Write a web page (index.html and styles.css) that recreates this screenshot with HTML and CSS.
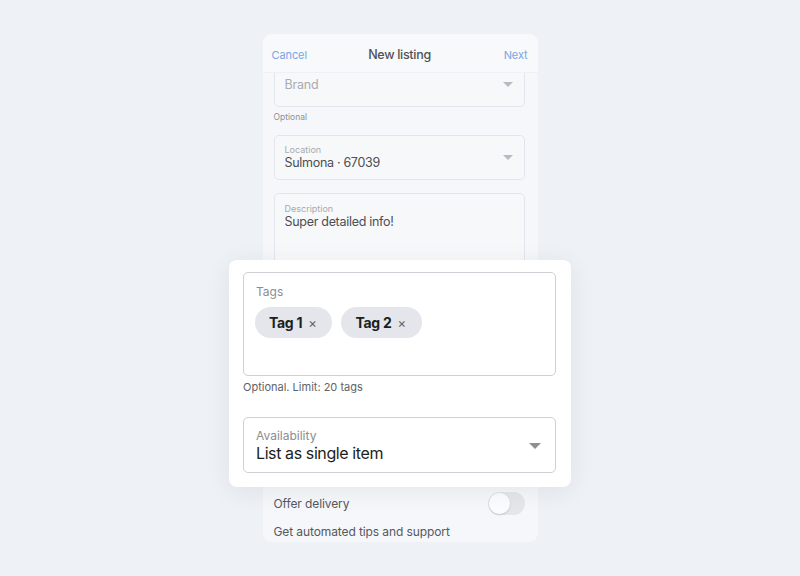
FILE: index.html
```html
<!DOCTYPE html>
<html>
<head>
<meta charset="utf-8">
<link rel="stylesheet" href="styles.css">
</head>
<body>
<div class="stage">
  <div class="phone">
    <div class="phone-header">
      <span class="link">Cancel</span>
      <span class="title">New listing</span>
      <span class="link link-right">Next</span>
    </div>
    <div class="phone-body">
      <div class="field field-brand">
        <span class="placeholder">Brand</span>
        <span class="caret"></span>
      </div>
      <div class="hint">Optional</div>
      <div class="field field-loc">
        <div class="field-text">
          <span class="label">Location</span>
          <span class="value">Sulmona · 67039</span>
        </div>
        <span class="caret"></span>
      </div>
      <div class="field field-desc">
        <div class="field-text">
          <span class="label">Description</span>
          <span class="value">Super detailed info!</span>
        </div>
      </div>
      <div class="field field-hidden"></div>
      <div class="field field-hidden2"></div>
      <div class="row row-first">
        <span>Offer delivery</span>
        <span class="toggle"><span class="knob"></span></span>
      </div>
      <div class="row">
        <span>Get automated tips and support</span>
      </div>
    </div>
  </div>

  <div class="card">
    <div class="tags-box">
      <div class="big-label">Tags</div>
      <div class="chips">
        <span class="chip">Tag 1 <span class="x">×</span></span>
        <span class="chip">Tag 2 <span class="x">×</span></span>
      </div>
    </div>
    <div class="big-hint">Optional. Limit: 20 tags</div>
    <div class="select-box">
      <div class="select-text">
        <span class="big-label">Availability</span>
        <span class="big-value">List as single item</span>
      </div>
      <span class="big-caret"></span>
    </div>
  </div>
</div>
</body>
</html>
```

FILE: styles.css
```css
* { box-sizing: border-box; }
html, body { margin: 0; padding: 0; }
body {
  background: #eef1f5;
  font-family: Inter, "Noto Sans", "Liberation Sans", sans-serif;
}
.stage {
  position: relative;
  width: 800px;
  height: 576px;
  padding-top: 34px;
}
.phone {
  width: 275px;
  height: 508px;
  margin: 0 auto;
  border-radius: 9px;
  background: #f5f7fa;
  overflow: hidden;
  display: flex;
  flex-direction: column;
}
.phone-header {
  position: relative;
  z-index: 2;
  height: 39px;
  flex: none;
  display: grid;
  grid-template-columns: 1fr auto 1fr;
  align-items: center;
  padding: 3px 10px 0 9px;
  background: #f7f9fb;
  border-bottom: 1px solid #eef0f3;
}
.link { font-size: 11px; color: #79a5e4; letter-spacing: -0.1px; }
.link-right { justify-self: end; }
.title { font-size: 12.5px; font-weight: 500; color: #505256; letter-spacing: -0.3px; }
.phone-body {
  padding: 0 13px 0 11px;
  display: flex;
  flex-direction: column;
}
.field {
  border: 1px solid #e2e5ea;
  border-radius: 5px;
  background: #f7f8fa;
  display: flex;
  align-items: center;
  justify-content: space-between;
  padding: 0 11px 0 10px;
}
.field-brand { margin-top: -12px; height: 46px; }
.placeholder { font-size: 12.5px; color: #a9acb0; letter-spacing: -0.2px; }
.caret {
  width: 0; height: 0;
  border-left: 5px solid transparent;
  border-right: 5px solid transparent;
  border-top: 5px solid #b8bbbf;
}
.hint { font-size: 8.5px; line-height: 12px; color: #8c8f94; margin-top: 4px; }
.field-loc { margin-top: 12px; height: 45px; }
.field-text { display: flex; flex-direction: column; }
.label { font-size: 9px; line-height: 11px; color: #a7aaae; }
.value { font-size: 12.5px; line-height: 16px; color: #4c4e52; letter-spacing: -0.3px; }
.field-desc { margin-top: 13px; height: 100px; align-items: flex-start; padding-top: 9px; }
.field-hidden { margin-top: 12px; height: 80px; }
.field-hidden2 { margin-top: 28px; height: 45px; }
.row {
  height: 28px;
  display: flex;
  align-items: center;
  justify-content: space-between;
  font-size: 12px;
  color: #55585c;
  letter-spacing: -0.1px;
}
.row-first { margin-top: 31px; }
.toggle {
  width: 37px;
  height: 23px;
  border-radius: 12px;
  background: #e4e6e9;
  position: relative;
}
.knob {
  position: absolute;
  left: 1px; top: 1px;
  width: 21px; height: 21px;
  border-radius: 50%;
  background: #fbfcfd;
  box-shadow: 0 1px 2px rgba(0,0,0,0.15);
}

.card {
  position: absolute;
  left: 229px;
  top: 260px;
  width: 342px;
  background: #fff;
  border-radius: 8px;
  padding: 12px 15px 14px 14px;
  box-shadow: 0 4px 24px rgba(40, 50, 70, 0.08);
}
.tags-box {
  height: 104px;
  border: 1px solid #cdd0d4;
  border-radius: 5px;
  padding: 11px 12px 0 11px;
}
.big-label { font-size: 12px; line-height: 15px; color: #8a8d91; display: block; }
.chips { display: flex; gap: 9px; margin-top: 8px; }
.chip {
  height: 31px;
  border-radius: 16px;
  background: #e4e6eb;
  display: flex;
  align-items: center;
  padding: 0 16px 0 14px;
  font-size: 14px;
  font-weight: 700;
  color: #1c1e21;
  letter-spacing: -0.3px;
  white-space: pre;
}
.tags-box .big-label { padding-left: 1px; }
.x { font-weight: 400; font-size: 13px; color: #606367; margin-left: 3px; }
.big-hint { font-size: 11px; line-height: 14px; color: #606367; margin-top: 4px; }
.select-box {
  margin-top: 23px;
  height: 56px;
  border: 1px solid #cdd0d4;
  border-radius: 5px;
  display: flex;
  align-items: center;
  justify-content: space-between;
  padding: 1px 14px 0 12px;
}
.select-text { display: flex; flex-direction: column; }
.big-value { font-size: 16px; line-height: 20px; color: #1c1e21; letter-spacing: -0.4px; }
.big-caret {
  width: 0; height: 0;
  border-left: 6px solid transparent;
  border-right: 6px solid transparent;
  border-top: 6px solid #8d9094;
}
```
